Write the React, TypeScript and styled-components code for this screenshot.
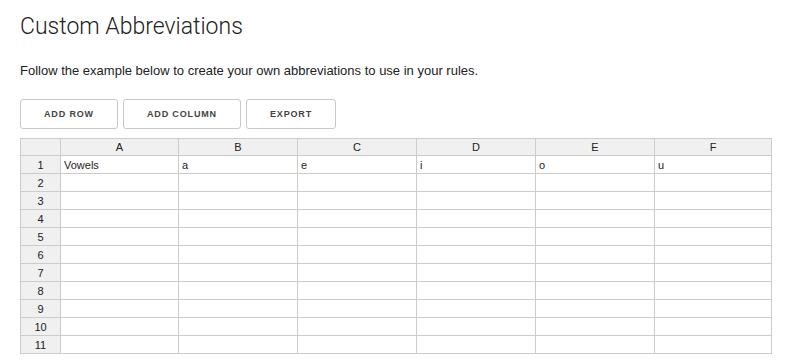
import React from 'react';
import styled, { createGlobalStyle } from 'styled-components';

const GlobalStyle = createGlobalStyle`
  html, body {
    margin: 0;
    padding: 0;
    background: #ffffff;
  }
  body {
    font-family: "Liberation Sans", Arial, sans-serif;
    color: #222222;
  }
`;

const Page = styled.div`
  padding: 12px 20px 0 20px;
`;

const Title = styled.h1`
  margin: 0;
  font-family: Roboto, "Liberation Sans", sans-serif;
  font-weight: 300;
  font-size: 23px;
  line-height: 30px;
  color: #222222;
`;

const Intro = styled.p`
  margin: 21px 0 0 0;
  font-size: 13px;
  line-height: 16px;
  color: #222222;
`;

const Toolbar = styled.div`
  display: flex;
  gap: 5px;
  margin-top: 20px;
`;

const Button = styled.button`
  height: 30px;
  padding: 0 23px;
  background: #ffffff;
  border: 1px solid #c8c8c8;
  border-radius: 3px;
  font-family: "Liberation Sans", Arial, sans-serif;
  font-weight: 700;
  font-size: 9px;
  letter-spacing: 0.85px;
  color: #444444;
  cursor: pointer;
`;

const Sheet = styled.table`
  width: 751px;
  margin-top: 9px;
  border-collapse: collapse;
  table-layout: fixed;
  font-size: 11px;
  color: #222222;
`;

const Col = styled.col<{ $w: number }>`
  width: ${({ $w }) => $w}px;
`;

const HeadCell = styled.th`
  height: 16px;
  padding: 0;
  background: #f0f0f0;
  border: 1px solid #cccccc;
  font-weight: 400;
  text-align: center;
`;

const RowHead = styled.th`
  height: 17px;
  padding: 0;
  background: #f0f0f0;
  border: 1px solid #cccccc;
  font-weight: 400;
  text-align: center;
`;

const Cell = styled.td`
  height: 17px;
  padding: 0 3px;
  border: 1px solid #cccccc;
  background: #ffffff;
  white-space: nowrap;
  overflow: hidden;
`;

const columns = [
  { label: 'A', width: 118 },
  { label: 'B', width: 119 },
  { label: 'C', width: 119 },
  { label: 'D', width: 119 },
  { label: 'E', width: 119 },
  { label: 'F', width: 117 },
];

const rows: string[][] = [
  ['Vowels', 'a', 'e', 'i', 'o', 'u'],
  ...Array.from({ length: 10 }, () => ['', '', '', '', '', '']),
];

export default function App() {
  return (
    <>
      <GlobalStyle />
      <Page>
        <Title>Custom Abbreviations</Title>
        <Intro>Follow the example below to create your own abbreviations to use in your rules.</Intro>
        <Toolbar>
          <Button>ADD ROW</Button>
          <Button>ADD COLUMN</Button>
          <Button>EXPORT</Button>
        </Toolbar>
        <Sheet>
          <colgroup>
            <Col $w={40} />
            {columns.map(col => (
              <Col key={col.label} $w={col.width} />
            ))}
          </colgroup>
          <thead>
            <tr>
              <HeadCell />
              {columns.map(col => (
                <HeadCell key={col.label}>{col.label}</HeadCell>
              ))}
            </tr>
          </thead>
          <tbody>
            {rows.map((row, i) => (
              <tr key={i}>
                <RowHead>{i + 1}</RowHead>
                {row.map((value, j) => (
                  <Cell key={j}>{value}</Cell>
                ))}
              </tr>
            ))}
          </tbody>
        </Sheet>
      </Page>
    </>
  );
}
